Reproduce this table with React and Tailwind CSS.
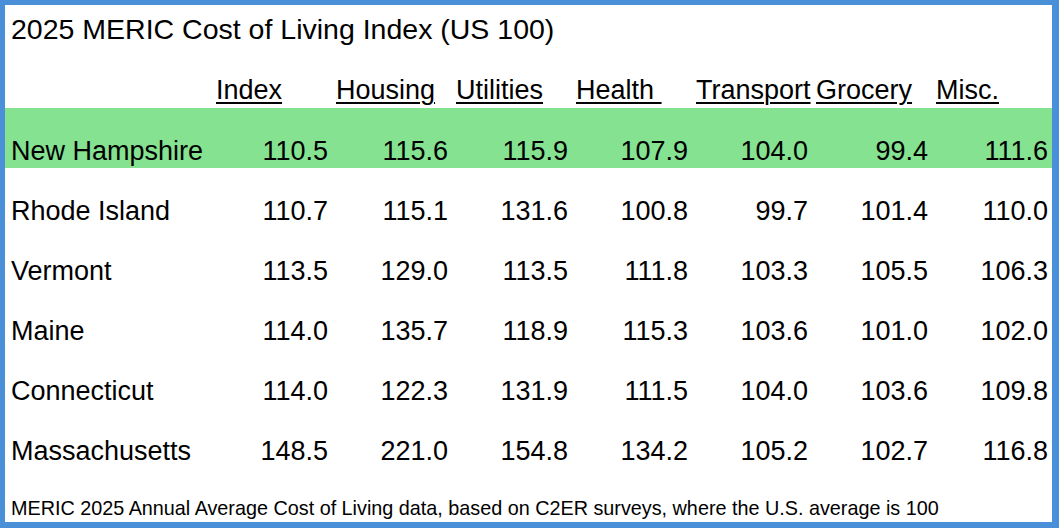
import React from "react";

const headers = ["Index", "Housing", "Utilities", "Health\u00a0", "Transport", "Grocery", "Misc."];
const rows = [
  ["New Hampshire", "110.5", "115.6", "115.9", "107.9", "104.0", "99.4", "111.6"],
  ["Rhode Island", "110.7", "115.1", "131.6", "100.8", "99.7", "101.4", "110.0"],
  ["Vermont", "113.5", "129.0", "113.5", "111.8", "103.3", "105.5", "106.3"],
  ["Maine", "114.0", "135.7", "118.9", "115.3", "103.6", "101.0", "102.0"],
  ["Connecticut", "114.0", "122.3", "131.9", "111.5", "104.0", "103.6", "109.8"],
  ["Massachusetts", "148.5", "221.0", "154.8", "134.2", "105.2", "102.7", "116.8"],
];

export default function App() {
  return (
    <div
      className="w-[1059px] h-[528px] bg-white border-l-[5px] border-t-[5px] border-r-[7px] border-b-[6px] border-[#4a90d9] text-black overflow-hidden"
      style={{ fontFamily: '"Liberation Sans", Arial, sans-serif' }}
    >
      <div className="h-[55px] flex items-end pl-[6px] pb-[15px] text-[28.5px] leading-[32px] whitespace-nowrap">
        2025 MERIC Cost of Living Index (US 100)
      </div>
      <div className="grid grid-cols-[203px_repeat(7,120px)_1fr] h-[48px] text-[27px] leading-[31px]">
        <div />
        {headers.map((h) => (
          <div key={h} className="flex items-end pl-[8px] pb-[2px] whitespace-pre overflow-visible">
            <span className="underline underline-offset-[3px] decoration-[1.5px]">{h}</span>
          </div>
        ))}
        <div />
      </div>
      {rows.map((r, i) => (
        <div
          key={r[0]}
          className={
            "grid grid-cols-[203px_repeat(7,120px)_1fr] h-[60px] text-[27px] leading-[31px] " +
            (i === 0 ? "bg-[#84e291]" : "")
          }
        >
          <div className="flex items-end pl-[6px] pb-[1px] whitespace-nowrap">{r[0]}</div>
          {r.slice(1).map((v, j) => (
            <div key={j} className="flex items-end justify-end pb-[1px]">
              {v}
            </div>
          ))}
          <div />
        </div>
      ))}
      <div className="h-[54px] flex items-end pl-[6px] pb-[2px] text-[19.8px] leading-[23px] whitespace-nowrap">
        MERIC 2025 Annual Average Cost of Living data, based on C2ER surveys, where the U.S. average is 100
      </div>
    </div>
  );
}
